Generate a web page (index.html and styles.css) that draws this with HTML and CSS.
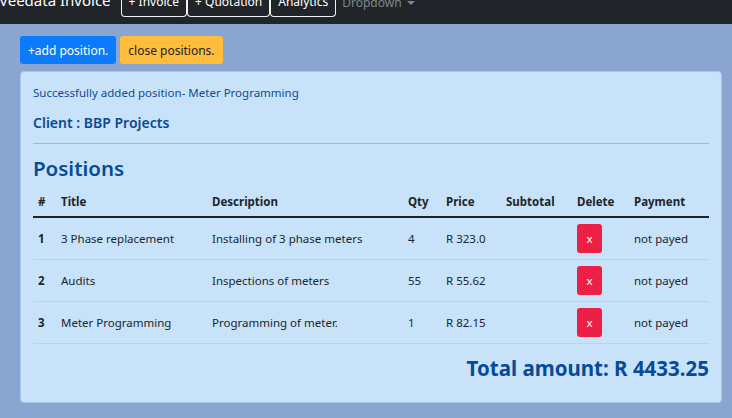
FILE: index.html
```html
<!DOCTYPE html>
<html>
<head>
<meta charset="utf-8">
<link rel="stylesheet" href="styles.css">
</head>
<body>
<nav class="navbar">
  <span class="brand">Veedata Invoice</span>
  <a class="nav-btn">+ Invoice</a>
  <a class="nav-btn">+ Quotation</a>
  <a class="nav-btn">Analytics</a>
  <span class="dropdown">Dropdown <span class="caret"></span></span>
</nav>
<main class="page">
  <div class="actions">
    <button class="btn btn-blue">+add position.</button>
    <button class="btn btn-yellow">close positions.</button>
  </div>
  <section class="card">
    <p class="msg">Successfully added position- Meter Programming</p>
    <h3 class="client">Client : BBP Projects</h3>
    <hr class="rule">
    <h2 class="title">Positions</h2>
    <table class="table">
      <thead>
        <tr><th class="c-num">#</th><th class="c-title">Title</th><th class="c-desc">Description</th><th class="c-qty">Qty</th><th class="c-price">Price</th><th class="c-sub">Subtotal</th><th class="c-del">Delete</th><th class="c-pay">Payment</th></tr>
      </thead>
      <tbody>
        <tr><td class="num">1</td><td>3 Phase replacement</td><td>Installing of 3 phase meters</td><td>4</td><td>R 323.0</td><td></td><td><button class="del">x</button></td><td>not payed</td></tr>
        <tr><td class="num">2</td><td>Audits</td><td>Inspections of meters</td><td>55</td><td>R 55.62</td><td></td><td><button class="del">x</button></td><td>not payed</td></tr>
        <tr><td class="num">3</td><td>Meter Programming</td><td>Programming of meter.</td><td>1</td><td>R 82.15</td><td></td><td><button class="del">x</button></td><td>not payed</td></tr>
      </tbody>
    </table>
    <div class="total">Total amount: R 4433.25</div>
  </section>
</main>
</body>
</html>
```
FILE: styles.css
```css
html, body {
  margin: 0;
  padding: 0;
}
body {
  background: #8aa5d0;
  font-family: "Noto Sans", "Open Sans", sans-serif;
  color: #212529;
  width: 732px;
  height: 418px;
  overflow: hidden;
}
.navbar {
  height: 24px;
  background: #212529;
  display: flex;
  align-items: flex-end;
  overflow: hidden;
  box-sizing: border-box;
}
.brand {
  color: #fff;
  font-size: 15px;
  line-height: 24px;
  margin-bottom: 12px;
  margin-left: -1px;
  margin-right: 10px;
  white-space: nowrap;
}
.nav-btn {
  color: #fff;
  font-size: 12px;
  border: 1px solid #f0f0f0;
  border-radius: 0 0 4px 4px;
  border-top: none;
  padding: 0 7px 6px;
  line-height: 16px;
  margin-bottom: 7px;
  white-space: nowrap;
}
.dropdown {
  color: #80858a;
  font-size: 12px;
  line-height: 16px;
  margin-bottom: 13px;
  margin-left: 6px;
  white-space: nowrap;
}
.caret {
  display: inline-block;
  width: 0;
  height: 0;
  border-left: 4px solid transparent;
  border-right: 4px solid transparent;
  border-top: 4px solid #80858a;
  vertical-align: 2px;
  margin-left: 2px;
}
.page {
  padding: 12px 10px 0 20px;
}
.actions {
  display: flex;
  gap: 4px;
  margin-bottom: 7px;
}
.btn {
  font-family: inherit;
  font-size: 12px;
  border: none;
  border-radius: 3px;
  height: 28px;
  padding: 0 8px;
  cursor: pointer;
}
.btn-blue {
  background: #0b7bfb;
  color: #fff;
}
.btn-yellow {
  background: #ffbd3b;
  color: #212529;
}
.card {
  background: #c8e2fa;
  border: 1px solid #a3c8ee;
  border-radius: 4px;
  padding: 13px 12px 20px 12px;
  box-sizing: border-box;
  width: 702px;
  height: 332px;
}
.msg {
  margin: 0;
  font-size: 11.5px;
  line-height: 16px;
  color: #0d4d92;
}
.client {
  margin: 12px 0 0;
  font-size: 14px;
  font-weight: 600;
  line-height: 20px;
  color: #0b4a8f;
}
.rule {
  margin: 10px 0 0;
  border: none;
  border-top: 1px solid #97bbe3;
}
.title {
  margin: 11px 0 0;
  font-size: 20.5px;
  font-weight: 600;
  line-height: 26px;
  color: #064b97;
}
.table {
  width: 100%;
  border-collapse: collapse;
  margin-top: 8px;
  font-size: 11.5px;
}
.table th {
  text-align: left;
  font-weight: 700;
  padding: 4px 0 7px;
  height: 16px;
  border-bottom: 2px solid #1d2326;
  white-space: nowrap;
}
.table td {
  padding: 0;
  height: 41px;
  border-bottom: 1px solid #b8d3ed;
  white-space: nowrap;
}
.table th.c-num, .table td.num {
  width: 23px;
  padding-left: 5px;
}
.table td.num { font-weight: 700; }
.c-title { width: 151px; }
.c-desc { width: 196px; }
.c-qty { width: 38px; }
.c-price { width: 60px; }
.c-sub { width: 71px; }
.c-del { width: 57px; }
.del {
  background: #ec1f45;
  color: #fff;
  border: none;
  border-radius: 3px;
  width: 25px;
  height: 29px;
  font-family: inherit;
  font-size: 11.5px;
  padding: 0;
  display: block;
}
.total {
  text-align: right;
  font-size: 20.5px;
  font-weight: 700;
  color: #064b97;
  margin-top: 11px;
  line-height: 26px;
}
```
